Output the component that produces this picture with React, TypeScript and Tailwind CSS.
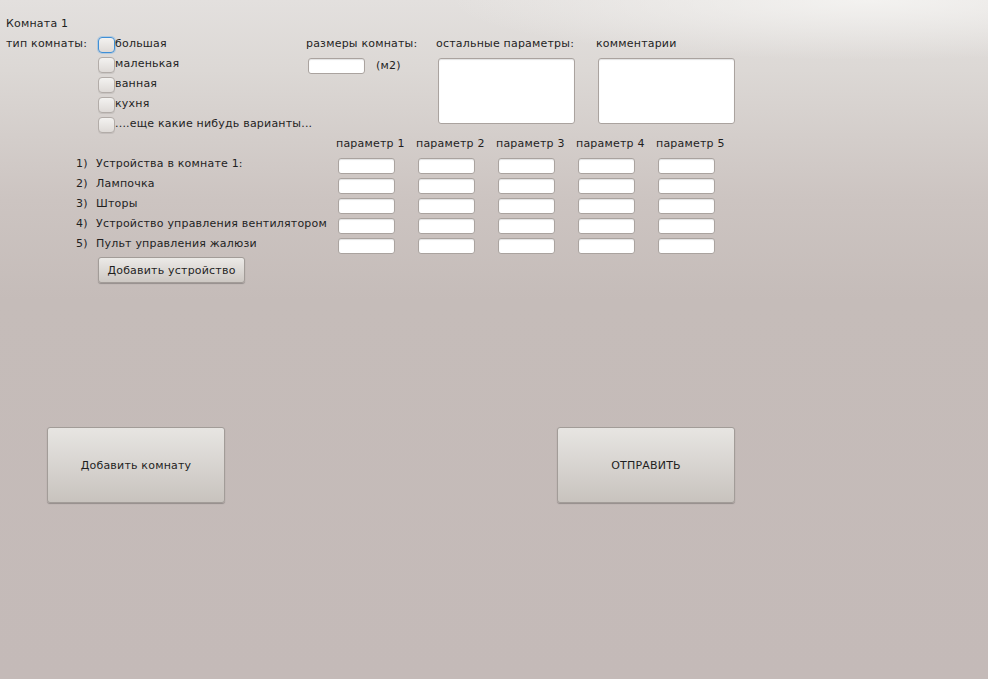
import React from "react";

const checks = ["большая", "маленькая", "ванная", "кухня", "....еще какие нибудь варианты..."];
const devices = [
  "Устройства в комнате 1:",
  "Лампочка",
  "Шторы",
  "Устройство управления вентилятором",
  "Пульт управления жалюзи",
];
const params = ["параметр 1", "параметр 2", "параметр 3", "параметр 4", "параметр 5"];

function Field() {
  return (
    <div className="ml-[2px] h-[16px] w-[57px] rounded-[3px] border border-[#aaa39f] bg-white shadow-[inset_0_1px_1px_rgba(0,0,0,0.12)]" />
  );
}

function Check({ focused }: { focused?: boolean }) {
  return (
    <div
      className={
        focused
          ? "h-[16px] w-[17px] shrink-0 rounded-[4px] border border-[#3f8fd6] bg-[linear-gradient(to_bottom,#f3f2f0,#dedad7)] shadow-[0_0_0_1px_rgba(120,180,230,0.45)]"
          : "h-[16px] w-[17px] shrink-0 rounded-[4px] border border-[#b2aca8] bg-[linear-gradient(to_bottom,#f3f2f0,#dedad7)] shadow-[0_1px_0_rgba(0,0,0,0.08)]"
      }
    />
  );
}

export default function App() {
  return (
    <div
      className="h-[679px] w-[988px] overflow-hidden bg-[image:radial-gradient(ellipse_420px_60px_at_88%_0%,rgba(245,244,242,0.9),rgba(245,244,242,0)),linear-gradient(to_bottom,#e3e0de_0px,#dcd8d5_70px,#ccc4c1_200px,#c5bcb9_300px,#c4bab8_679px)] pl-[6px] pt-[17px] text-[11px] leading-[13px] tracking-[0.2px] text-[#1f1f1f]"
      style={{ fontFamily: '"DejaVu Sans", "Liberation Sans", sans-serif' }}
    >
      <div>Комната 1</div>

      <div className="mt-[7px] flex">
        <div className="w-[92px] whitespace-nowrap">тип комнаты:</div>
        <div className="flex w-[208px] flex-col">
          {checks.map((c, i) => (
            <div key={c} className="flex h-[20px] items-start">
              <Check focused={i === 0} />
              <span className="whitespace-nowrap">{c}</span>
            </div>
          ))}
        </div>
        <div className="w-[130px]">
          <div className="whitespace-nowrap">размеры комнаты:</div>
          <div className="mt-[8px] flex items-start">
            <Field />
            <span className="ml-[11px] mt-[1px]">(м2)</span>
          </div>
        </div>
        <div className="w-[160px]">
          <div className="whitespace-nowrap">остальные параметры:</div>
          <div className="ml-[2px] mt-[8px] h-[66px] w-[137px] rounded-[3px] border border-[#aaa39f] bg-white shadow-[inset_0_1px_1px_rgba(0,0,0,0.12)]" />
        </div>
        <div>
          <div className="whitespace-nowrap">комментарии</div>
          <div className="ml-[2px] mt-[8px] h-[66px] w-[137px] rounded-[3px] border border-[#aaa39f] bg-white shadow-[inset_0_1px_1px_rgba(0,0,0,0.12)]" />
        </div>
      </div>

      <div className="flex h-[20px] pl-[330px]">
        {params.map((p) => (
          <div key={p} className="w-[80px] whitespace-nowrap">
            {p}
          </div>
        ))}
      </div>

      {devices.map((d, i) => (
        <div key={d} className="flex h-[20px] items-start pl-[70px]">
          <div className="w-[20px]">{i + 1})</div>
          <div className="w-[240px] whitespace-nowrap">{d}</div>
          {params.map((p) => (
            <div key={p} className="mt-[1px] w-[80px]">
              <Field />
            </div>
          ))}
        </div>
      ))}

      <button className="ml-[92px] flex h-[26px] w-[147px] items-center justify-center rounded-[3px] border border-[#a29c98] bg-[linear-gradient(to_bottom,#eceae7,#cdc8c3)] text-[11px] tracking-[0.2px] text-[#1f1f1f] shadow-[0_1px_1px_rgba(0,0,0,0.25)]">
        Добавить устройство
      </button>

      <div className="mt-[144px] flex gap-[332px] pl-[41px]">
        <button className="flex h-[76px] w-[178px] items-center justify-center rounded-[3px] border border-[#a29c98] bg-[linear-gradient(to_bottom,#e7e5e2,#c8c3be)] text-[11px] tracking-[0.2px] text-[#1f1f1f] shadow-[0_1px_1px_rgba(0,0,0,0.25)]">
          Добавить комнату
        </button>
        <button className="flex h-[76px] w-[178px] items-center justify-center rounded-[3px] border border-[#a29c98] bg-[linear-gradient(to_bottom,#e7e5e2,#c8c3be)] text-[11px] tracking-[0.2px] text-[#1f1f1f] shadow-[0_1px_1px_rgba(0,0,0,0.25)]">
          ОТПРАВИТЬ
        </button>
      </div>
    </div>
  );
}
